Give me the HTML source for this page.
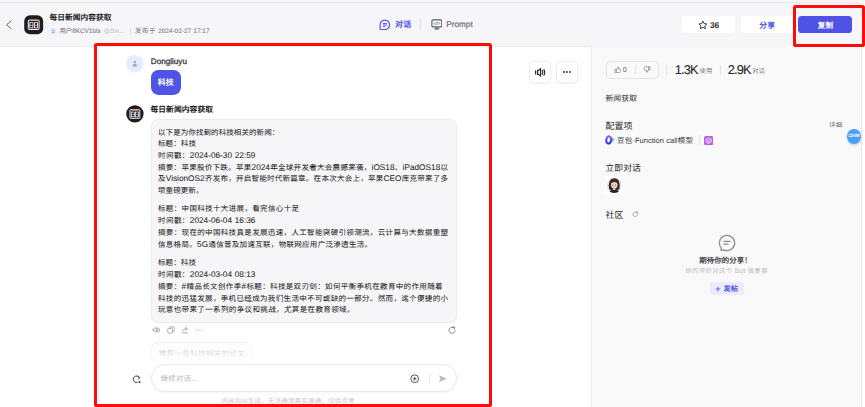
<!DOCTYPE html>
<html lang="zh-CN">
<head>
<meta charset="utf-8">
<title>每日新闻内容获取</title>
<style>
html,body{margin:0;padding:0;}
body{width:865px;height:407px;position:relative;overflow:hidden;background:#fff;font-family:"Liberation Sans",sans-serif;text-rendering:geometricPrecision;}
.b{position:absolute;display:block;}
.t{position:absolute;display:block;white-space:nowrap;line-height:12px;height:12px;}
.j{text-align:justify;text-align-last:justify;}
.l{font-size:1.1em;line-height:0;}
.m{-webkit-text-stroke:0.05px currentColor;}
</style>
</head>
<body>
<div class="b" style="left:0px;top:0px;width:865.00px;height:2.40px;background:#f7f7f7;"></div>
<div class="b" style="left:0px;top:2.2px;width:861.70px;height:44.40px;background:#f6f6f8;border-top:0.8px solid #e9e9eb;border-bottom:0.7px solid #e9e9ec;border-top-right-radius:4px;box-sizing:border-box;"></div>
<div class="b" style="left:591.3px;top:46.4px;width:270.30px;height:360.60px;background:#f9f9f9;border-left:0.7px solid #ebebee;border-right:0.7px solid #e6e6ea;box-sizing:border-box;"></div>
<svg class="b" style="left:5px;top:19px;" width="8.00" height="12.00" viewBox="0 0 8.00 12.00"><polyline points="6.3,1.8 1.6,5.75 6.3,9.7" fill="none" stroke="#6a6a72" stroke-width="1" stroke-linecap="round" stroke-linejoin="round"/></svg>
<svg class="b" style="left:23.2px;top:14.2px;" width="21.40" height="21.40" viewBox="0 0 21.40 21.40"><circle cx="10.7" cy="10.7" r="10.5" fill="#fff"/><rect x="1.2" y="1.2" width="19.0" height="19.0" rx="5.89" fill="#1c1c23"/><rect x="5.30" y="6.10" width="10.80" height="9.40" rx="0.80" fill="none" stroke="#fff" stroke-width="1.00"/><rect x="7.10" y="5.80" width="7.20" height="1.30" fill="#f0a060"/><rect x="6.80" y="8.70" width="3.20" height="5.20" fill="none" stroke="#fff" stroke-width="0.80"/><rect x="11.40" y="8.70" width="3.20" height="5.20" fill="none" stroke="#fff" stroke-width="0.80"/><line x1="6.80" y1="11.30" x2="10.00" y2="11.30" stroke="#fff" stroke-width="0.60"/><line x1="11.40" y1="11.30" x2="14.60" y2="11.30" stroke="#fff" stroke-width="0.60"/></svg>
<span class="t j" style="left:49.6px;top:11.80px;font-size:7.7px;color:#1b1b1f;width:61.9px;font-weight:bold;">每日新闻内容获取</span>
<svg class="b" style="left:49.6px;top:28.3px;" width="6.30" height="6.30" viewBox="0 0 6.30 6.30"><circle cx="3.15" cy="3.15" r="3.15" fill="#dde9fb"/><circle cx="3.15" cy="2.5" r="0.8" fill="#6f96e6"/><path d="M1.7 4.7 Q3.15 2.6 4.6 4.7 Z" fill="#6f96e6"/></svg>
<span class="t j" style="left:59.4px;top:25.50px;font-size:6.4px;color:#84848c;width:41px;-webkit-text-stroke:0.12px #84848c;">用户8KCV1bls</span>
<span class="t" style="left:103.4px;top:25.50px;font-size:6.4px;color:#bdbdc4;">@Sin...</span>
<div class="b" style="left:129.8px;top:28px;width:0.60px;height:7.00px;background:#dcdce1;"></div>
<span class="t j" style="left:135px;top:25.50px;font-size:6.45px;color:#84848c;width:74.5px;-webkit-text-stroke:0.12px #84848c;">发布于 2024-02-27 17:17</span>
<svg class="b" style="left:379.2px;top:18.5px;" width="11.40" height="11.70" viewBox="0 0 11.40 11.70"><path d="M1.1 5.85 A4.75 4.75 0 1 1 5.85 10.6 L2.3 10.6 Q1.1 10.6 1.1 9.4 Z" fill="none" stroke="#4d53e8" stroke-width="1.2"/><path d="M4 4.5 H7.9 M4 6 H7.9 M4 7.5 H6.2" stroke="#4d53e8" stroke-width="0.95" fill="none"/></svg>
<span class="t j" style="left:395px;top:18.70px;font-size:8.0px;color:#4d53e8;width:16.2px;font-weight:bold;">对话</span>
<div class="b" style="left:419.9px;top:18.3px;width:0.60px;height:12.50px;background:#e2e2e6;"></div>
<svg class="b" style="left:430.5px;top:19.2px;" width="11.70" height="10.70" viewBox="0 0 11.70 10.70"><rect x="0.9" y="0.9" width="9.9" height="7" rx="1" fill="none" stroke="#5a5a62" stroke-width="1.1"/><path d="M3.4 9.9 H8.3 M5.85 7.9 V9.9" stroke="#5a5a62" stroke-width="1.1" fill="none"/><path d="M4.3 3.2 L3.1 4.4 L4.3 5.6 M7.4 3.2 L8.6 4.4 L7.4 5.6 M6.4 3 L5.3 5.8" stroke="#5a5a62" stroke-width="0.75" fill="none"/></svg>
<span class="t" style="left:446.3px;top:18.80px;font-size:8.2px;color:#6e6e76;-webkit-text-stroke:0.2px #6e6e76;">Prompt</span>
<div class="b" style="left:682.2px;top:15.8px;width:52.50px;height:17.60px;background:#fff;border-radius:3.5px;"></div>
<svg class="b" style="left:698.2px;top:19.7px;" width="9.80" height="9.80" viewBox="0 0 9.80 9.80"><path d="M4.9 1 L6.1 3.6 L8.9 3.95 L6.85 5.9 L7.4 8.7 L4.9 7.3 L2.4 8.7 L2.95 5.9 L0.9 3.95 L3.7 3.6 Z" fill="none" stroke="#2c2c30" stroke-width="0.9" stroke-linejoin="round"/></svg>
<span class="t" style="left:710.0px;top:19.00px;font-size:8.3px;color:#2c2c30;font-weight:bold;">36</span>
<div class="b" style="left:740.9px;top:15.8px;width:52.70px;height:17.60px;background:#fff;border-radius:3.5px;"></div>
<span class="t j" style="left:759.3px;top:19.50px;font-size:7.75px;color:#4d53e8;width:15.6px;font-weight:bold;">分享</span>
<div class="b" style="left:798.2px;top:15.7px;width:53.90px;height:17.80px;background:#4e53e6;border-radius:3.6px;"></div>
<span class="t j" style="left:817.8px;top:19.50px;font-size:7.6px;color:#fff;width:15.3px;font-weight:bold;">复制</span>
<svg class="b" style="left:126.4px;top:55.2px;" width="17.50" height="17.50" viewBox="0 0 17.50 17.50"><circle cx="8.75" cy="8.75" r="8.75" fill="#e4edfb"/><circle cx="8.75" cy="7.1" r="1.25" fill="#8ea8da"/><path d="M6.5 11.6 Q6.5 8.7 8.75 8.7 Q11 8.7 11 11.6 Z" fill="#8ea8da"/></svg>
<span class="t" style="left:150.8px;top:55.70px;font-size:8.15px;color:#36363c;-webkit-text-stroke:0.3px #36363c;">Dongliuyu</span>
<div class="b" style="left:150.9px;top:70.3px;width:29.90px;height:24.50px;background:#4e54e6;border-radius:7.4px;"></div>
<span class="t j" style="left:157.8px;top:76.60px;font-size:7.95px;color:#fff;width:16px;font-weight:bold;">科技</span>
<svg class="b" style="left:125.25px;top:103.6px;" width="19.80" height="19.80" viewBox="0 0 19.80 19.80"><rect x="1.2" y="1.2" width="17.4" height="17.4" rx="8.7" fill="#1c1c23"/><rect x="4.95" y="5.69" width="9.89" height="8.61" rx="0.73" fill="none" stroke="#fff" stroke-width="0.92"/><rect x="6.60" y="5.41" width="6.59" height="1.19" fill="#f0a060"/><rect x="6.33" y="8.07" width="2.93" height="4.76" fill="none" stroke="#fff" stroke-width="0.73"/><rect x="10.54" y="8.07" width="2.93" height="4.76" fill="none" stroke="#fff" stroke-width="0.73"/><line x1="6.33" y1="10.45" x2="9.26" y2="10.45" stroke="#fff" stroke-width="0.55"/><line x1="10.54" y1="10.45" x2="13.47" y2="10.45" stroke="#fff" stroke-width="0.55"/></svg>
<span class="t j" style="left:150.4px;top:103.90px;font-size:7.78px;color:#1b1b1f;width:62.6px;font-weight:bold;">每日新闻内容获取</span>
<div class="b" style="left:150.7px;top:118.6px;width:306.10px;height:204.20px;background:#f6f6f8;border:0.7px solid #ebebef;border-radius:7px;box-sizing:border-box;"></div>
<span class="t j m" style="left:158px;top:126.60px;font-size:7.5px;color:#1e1e22;width:121.3px;">以下是为你找到的科技相关的新闻：</span>
<span class="t j m" style="left:158px;top:138.30px;font-size:7.5px;color:#1e1e22;width:38px;">标题：科技</span>
<span class="t j m" style="left:158px;top:150.00px;font-size:7.5px;color:#1e1e22;width:97.4px;">时间戳：<span class="l">2024-06-30 22:59</span></span>
<span class="t j m" style="left:158px;top:161.70px;font-size:7.5px;color:#1e1e22;width:290px;">摘要：苹果股价下跌。苹果<span class="l">2024</span>年全球开发者大会震撼来袭，<span class="l">iOS18</span>、<span class="l">iPadOS18</span>以</span>
<span class="t j m" style="left:158px;top:173.40px;font-size:7.5px;color:#1e1e22;width:290px;">及<span class="l">VisionOS2</span>齐发布，开启智能时代新篇章。在本次大会上，苹果<span class="l">CEO</span>库克带来了多</span>
<span class="t j m" style="left:158px;top:185.10px;font-size:7.5px;color:#1e1e22;width:45.4px;">项重磅更新。</span>
<span class="t j m" style="left:158px;top:203.40px;font-size:7.5px;color:#1e1e22;width:141px;">标题：中国科技十大进展，看完信心十足</span>
<span class="t j m" style="left:158px;top:215.20px;font-size:7.5px;color:#1e1e22;width:97.4px;">时间戳：<span class="l">2024-06-04 16:36</span></span>
<span class="t j m" style="left:158px;top:226.90px;font-size:7.5px;color:#1e1e22;width:290px;">摘要：现在的中国科技真是发展迅速，人工智能突破引领潮流，云计算与大数据重塑</span>
<span class="t j m" style="left:158px;top:238.70px;font-size:7.5px;color:#1e1e22;width:214px;">信息格局。<span class="l">5G</span>通信普及加速互联，物联网应用广泛渗透生活。</span>
<span class="t j m" style="left:158px;top:257.40px;font-size:7.5px;color:#1e1e22;width:38px;">标题：科技</span>
<span class="t j m" style="left:158px;top:269.10px;font-size:7.5px;color:#1e1e22;width:97.4px;">时间戳：<span class="l">2024-03-04 08:13</span></span>
<span class="t j m" style="left:158px;top:280.80px;font-size:7.5px;color:#1e1e22;width:284.5px;">摘要：<span class="l">#</span>精品长文创作季<span class="l">#</span>标题：科技是双刃剑：如何平衡手机在教育中的作用随着</span>
<span class="t j m" style="left:158px;top:292.50px;font-size:7.5px;color:#1e1e22;width:290px;">科技的迅猛发展，手机已经成为我们生活中不可或缺的一部分。然而，这个便捷的小</span>
<span class="t j m" style="left:158px;top:304.30px;font-size:7.5px;color:#1e1e22;width:196.5px;">玩意也带来了一系列的争议和挑战，尤其是在教育领域。</span>
<svg class="b" style="left:151.5px;top:326.3px;" width="8.60" height="7.90" viewBox="0 0 8.60 7.90"><path d="M1 3 H2.4 L4.4 1.3 V6.6 L2.4 4.9 H1 Z" fill="none" stroke="#8b8b93" stroke-width="0.7" stroke-linejoin="round"/><path d="M5.6 2.6 Q6.5 3.95 5.6 5.3 M6.8 1.7 Q8.2 3.95 6.8 6.2" fill="none" stroke="#8b8b93" stroke-width="0.7" stroke-linecap="round"/></svg>
<svg class="b" style="left:166.5px;top:326.3px;" width="8.00" height="7.90" viewBox="0 0 8.00 7.90"><rect x="0.8" y="2.4" width="4.6" height="4.7" rx="0.8" fill="none" stroke="#8b8b93" stroke-width="0.7"/><path d="M2.6 2.2 V1.5 Q2.6 0.8 3.3 0.8 H6.5 Q7.2 0.8 7.2 1.5 V4.8 Q7.2 5.5 6.5 5.5 H5.6" fill="none" stroke="#8b8b93" stroke-width="0.7"/></svg>
<svg class="b" style="left:180.9px;top:326.3px;" width="8.00" height="7.90" viewBox="0 0 8.00 7.90"><path d="M1 6.9 H7" stroke="#8b8b93" stroke-width="0.7" fill="none"/><path d="M1.4 5.2 Q2 2.6 5.2 2.6 M4.4 1 L6.6 2.7 L4.4 4.3" stroke="#8b8b93" stroke-width="0.7" fill="none" stroke-linecap="round" stroke-linejoin="round"/></svg>
<svg class="b" style="left:195.3px;top:326.3px;" width="8.20" height="7.90" viewBox="0 0 8.20 7.90"><circle cx="1.6" cy="4" r="0.55" fill="#8b8b93"/><circle cx="4.1" cy="4" r="0.55" fill="#8b8b93"/><circle cx="6.6" cy="4" r="0.55" fill="#8b8b93"/></svg>
<svg class="b" style="left:447.5px;top:326.3px;" width="8.50" height="7.90" viewBox="0 0 8.50 7.90"><path d="M7.2 4.6 A3.1 3.1 0 1 1 6.1 1.9" fill="none" stroke="#7c7c84" stroke-width="0.9" stroke-linecap="round"/><path d="M4.9 0.7 L6.9 1.3 L6.3 3.2" fill="none" stroke="#7c7c84" stroke-width="0.9" stroke-linecap="round" stroke-linejoin="round"/></svg>
<div class="b" style="left:151.2px;top:341.5px;width:100.80px;height:24.50px;background:#fdfdfe;border:0.7px solid #f0f0f3;border-radius:7px;box-sizing:border-box;"></div>
<span class="t j" style="left:158.7px;top:348.00px;font-size:7.5px;color:#bcbcc2;width:86.2px;">推荐一些科技相关的论文</span>
<div class="b" style="left:145px;top:343px;width:117.00px;height:25.00px;background:linear-gradient(to bottom, rgba(255,255,255,0) 0%, rgba(255,255,255,0.55) 45%, #fff 80%);"></div>
<div class="b" style="left:150.5px;top:364.3px;width:306.50px;height:28.00px;background:#fff;border:0.7px solid #e9e9ed;border-radius:14px;box-sizing:border-box;box-shadow:0 1px 3px rgba(0,0,0,0.04);"></div>
<span class="t j" style="left:160.5px;top:372.80px;font-size:7.5px;color:#b6b6bc;width:36.9px;">继续对话...</span>
<svg class="b" style="left:131.9px;top:374.7px;" width="9.80" height="8.80" viewBox="0 0 9.80 8.80"><path d="M7.4 2.6 A3.3 3.3 0 1 0 5.2 7.5" fill="none" stroke="#3e3e44" stroke-width="1" stroke-linecap="round"/><path d="M5.9 1.3 L7.7 2.4 L6.6 4.1" fill="none" stroke="#3e3e44" stroke-width="0.9" stroke-linecap="round" stroke-linejoin="round"/><path d="M7.5 5.3 L8 6.5 L9.2 7 L8 7.5 L7.5 8.7 L7 7.5 L5.8 7 L7 6.5 Z" fill="#3e3e44"/></svg>
<svg class="b" style="left:410.3px;top:373.7px;" width="9.40" height="9.50" viewBox="0 0 9.40 9.50"><circle cx="4.7" cy="4.75" r="3.9" fill="none" stroke="#2e2e33" stroke-width="0.8"/><path d="M4.7 2.9 V6.6 M2.85 4.75 H6.55" stroke="#2e2e33" stroke-width="0.8" fill="none"/></svg>
<div class="b" style="left:428.6px;top:374px;width:0.60px;height:9.00px;background:#e2e2e6;"></div>
<svg class="b" style="left:438.4px;top:373.7px;" width="9.70" height="9.50" viewBox="0 0 9.70 9.50"><path d="M1 1.2 L8.6 4.75 L1 8.3 L2.4 4.75 Z" fill="#b9b9bf"/></svg>
<span class="t j" style="left:221.4px;top:395.70px;font-size:6.5px;color:#cacace;width:133.2px;">内容由AI生成，无法确保真实准确，仅供参考</span>
<div class="b" style="left:528.7px;top:60.5px;width:22.20px;height:22.20px;background:#fff;border:0.6px solid #f0f0f3;border-radius:5px;box-sizing:border-box;box-shadow:0 0.5px 2.5px rgba(0,0,0,0.06);"></div>
<svg class="b" style="left:533.9px;top:66.5px;" width="12.10" height="10.80" viewBox="0 0 12.10 10.80"><path d="M3.6 3.4 H4.6 L6.6 1.6 V9.2 L4.6 7.4 H3.6 Z" fill="none" stroke="#222226" stroke-width="1.15" stroke-linejoin="round"/><path d="M1.6 3.9 V6.9" stroke="#222226" stroke-width="1.2" fill="none" stroke-linecap="round"/><path d="M8.3 3.6 Q9.3 5.4 8.3 7.2 M9.9 2.6 Q11.6 5.4 9.9 8.2" fill="none" stroke="#222226" stroke-width="1.1" stroke-linecap="round"/></svg>
<div class="b" style="left:555.5px;top:60.5px;width:22.40px;height:22.20px;background:#fff;border:0.6px solid #f0f0f3;border-radius:5px;box-sizing:border-box;box-shadow:0 0.5px 2.5px rgba(0,0,0,0.06);"></div>
<svg class="b" style="left:562px;top:69.6px;" width="10.00" height="4.00" viewBox="0 0 10.00 4.00"><circle cx="1.9" cy="2" r="0.95" fill="#2a2a2e"/><circle cx="4.95" cy="2" r="0.95" fill="#2a2a2e"/><circle cx="8" cy="2" r="0.95" fill="#2a2a2e"/></svg>
<div class="b" style="left:605.5px;top:60.5px;width:53.20px;height:18.20px;border:0.7px solid #e4e4e8;border-radius:4px;box-sizing:border-box;background:#fafafa;"></div>
<svg class="b" style="left:613.5px;top:65.8px;" width="7.80" height="7.30" viewBox="0 0 7.80 7.30"><path d="M1 3.5 H2.4 V6.6 H1 Z M2.4 3.6 L3.9 0.9 Q4.9 1.1 4.5 2.3 L4.3 3.1 H6.3 Q7 3.2 6.8 3.9 L6.1 6.2 Q5.9 6.6 5.5 6.6 H2.4" fill="none" stroke="#77777f" stroke-width="0.65" stroke-linejoin="round"/></svg>
<span class="t" style="left:622.8px;top:63.80px;font-size:7.3px;color:#66666e;">0</span>
<div class="b" style="left:635.3px;top:65.5px;width:0.60px;height:8.20px;background:#e3e3e7;"></div>
<svg class="b" style="left:643.1px;top:66.2px;" width="8.00" height="7.30" viewBox="0 0 8.00 7.30"><g transform="rotate(180 4 3.65)"><path d="M1 3.5 H2.4 V6.6 H1 Z M2.4 3.6 L3.9 0.9 Q4.9 1.1 4.5 2.3 L4.3 3.1 H6.3 Q7 3.2 6.8 3.9 L6.1 6.2 Q5.9 6.6 5.5 6.6 H2.4" fill="none" stroke="#77777f" stroke-width="0.65" stroke-linejoin="round"/></g></svg>
<div class="b" style="left:666.4px;top:65px;width:0.60px;height:9.50px;background:#e3e3e7;"></div>
<span class="t" style="left:674.8px;top:61.70px;font-size:12.8px;color:#26262a;line-height:16px;height:16px;letter-spacing:-0.9px;-webkit-text-stroke:0.1px #26262a;">1.3K</span>
<span class="t j" style="left:699.5px;top:65.60px;font-size:6.35px;color:#7d7d85;width:12.8px;">使用</span>
<div class="b" style="left:719.7px;top:65px;width:0.60px;height:9.50px;background:#e3e3e7;"></div>
<span class="t" style="left:727.8px;top:61.70px;font-size:12.8px;color:#26262a;line-height:16px;height:16px;letter-spacing:-0.9px;-webkit-text-stroke:0.1px #26262a;">2.9K</span>
<span class="t j" style="left:752.2px;top:65.60px;font-size:6.35px;color:#7d7d85;width:12.8px;">对话</span>
<span class="t j" style="left:605.4px;top:92.90px;font-size:7.85px;color:#2d2d31;width:31.6px;">新闻获取</span>
<span class="t j" style="left:605.4px;top:119.60px;font-size:8.95px;color:#1f1f23;width:27.1px;">配置项</span>
<span class="t j" style="left:829px;top:119.60px;font-size:6.5px;color:#6f6f77;width:13.2px;">详细</span>
<svg class="b" style="left:605.3px;top:135.2px;" width="9.40" height="9.80" viewBox="0 0 9.40 9.80"><defs><linearGradient id="dbg" x1="0.3" y1="0" x2="0.4" y2="1"><stop offset="0" stop-color="#a862f2"/><stop offset="0.55" stop-color="#5a3cf0"/><stop offset="1" stop-color="#1f36f2"/></linearGradient></defs><path d="M4.6 2.1 Q9.9 4.2 8.7 5.1 Q7 6.8 4.2 8.1 Z" fill="#2dd6a6" stroke="#2dd6a6" stroke-width="1" stroke-linejoin="round"/><ellipse cx="3.7" cy="4.95" rx="2.35" ry="3.6" transform="rotate(12 3.7 4.95)" fill="#fdfdff" stroke="url(#dbg)" stroke-width="2"/></svg>
<span class="t j" style="left:617px;top:134.50px;font-size:7.55px;color:#38383c;width:76px;">豆包·Function call模型</span>
<div class="b" style="left:698.7px;top:135px;width:0.60px;height:10.30px;background:#e1e1e5;"></div>
<svg class="b" style="left:704.1px;top:135.7px;" width="9.30" height="9.20" viewBox="0 0 9.30 9.20"><rect x="0" y="0" width="9.3" height="9.2" rx="2" fill="#b95de9"/><path d="M4.65 1.9 L7.2 3.3 V6 L4.65 7.4 L2.1 6 V3.3 Z M2.1 3.3 L4.65 4.7 L7.2 3.3 M4.65 4.7 V7.4" fill="none" stroke="#fff" stroke-width="0.7" stroke-linejoin="round"/></svg>
<div class="b" style="left:846.8px;top:129px;width:14.20px;height:14.50px;background:#4aa0f6;border-radius:50%;box-shadow:0 1px 2.5px rgba(60,120,220,0.35);"></div>
<span class="t" style="left:846.8px;top:130.30px;font-size:4.6px;color:#fff;font-weight:bold;width:14.2px;text-align:center;letter-spacing:-0.1px;">124M</span>
<span class="t j" style="left:605.4px;top:161.90px;font-size:8.8px;color:#1f1f23;width:35.5px;">立即对话</span>
<svg class="b" style="left:605.2px;top:175.7px;" width="18.40" height="18.40" viewBox="0 0 18.40 18.40"><rect x="0" y="0" width="18.4" height="18.4" rx="3.5" fill="#fff"/><clipPath id="avc"><circle cx="9.2" cy="9.4" r="7.6"/></clipPath><circle cx="9.2" cy="9.4" r="7.6" fill="#d9e9fb"/><g clip-path="url(#avc)"><path d="M3.6 17.5 Q4.2 13.4 9.2 13.4 Q14.2 13.4 14.8 17.5 Z" fill="#23232b"/><path d="M4.1 13.2 Q3.2 8 4.6 5.2 Q6.2 2.2 9.3 2.2 Q12.6 2.2 14 5.2 Q15.2 8 14.4 13.2 Q11 14.6 9.2 14.4 Q7 14.6 4.1 13.2 Z" fill="#3b2a28"/><rect x="8.1" y="11.4" width="2.2" height="2.6" fill="#eec4ad"/><ellipse cx="9.3" cy="8.6" rx="3.3" ry="3.9" fill="#f3d2bf"/><path d="M5.6 7.6 Q6.6 4 10.2 4.4 Q13 4.8 12.9 8 Q11.4 6.2 9.4 6 Q7.2 6.2 5.6 7.6 Z" fill="#3b2a28"/><circle cx="7.9" cy="9" r="0.5" fill="#3a2a2a"/><circle cx="10.7" cy="9" r="0.5" fill="#3a2a2a"/><path d="M8.5 11 Q9.3 11.5 10.1 11" stroke="#c9766e" stroke-width="0.5" fill="none"/></g></svg>
<span class="t j" style="left:605.4px;top:208.60px;font-size:8.8px;color:#1f1f23;width:17.8px;">社区</span>
<svg class="b" style="left:631.5px;top:210.8px;" width="7.00" height="6.70" viewBox="0 0 7.00 6.70"><path d="M5.7 3.4 A2.3 2.3 0 1 1 4.9 1.6" fill="none" stroke="#8b8b93" stroke-width="0.7" stroke-linecap="round"/><path d="M4.3 0.7 L5.7 1.2 L5.2 2.6" fill="none" stroke="#8b8b93" stroke-width="0.7" stroke-linecap="round" stroke-linejoin="round"/></svg>
<svg class="b" style="left:717.7px;top:234.3px;" width="18.00" height="18.00" viewBox="0 0 18.00 18.00"><path d="M9 16.6 A7.6 7.6 0 1 0 3.4 14.1 Q3.4 15.3 2.9 16 Q4.6 16.3 5.6 15.8 Q7.2 16.6 9 16.6 Z" fill="none" stroke="#8a8a90" stroke-width="1.3" stroke-linejoin="round"/><path d="M5.9 7.3 H12.1 M5.9 10.2 H10" stroke="#8a8a90" stroke-width="1.3" stroke-linecap="round" fill="none"/></svg>
<span class="t j" style="left:699.2px;top:255.10px;font-size:7.45px;color:#4a4a50;width:52.5px;font-weight:bold;">期待你的分享！</span>
<span class="t j" style="left:685.2px;top:265.50px;font-size:6.45px;color:#bcbcc2;width:82.4px;">你的评价对这个 <span class="l">Bot</span> 很重要</span>
<div class="b" style="left:709.6px;top:281.7px;width:34.00px;height:13.30px;background:#ebebfd;border-radius:3px;"></div>
<svg class="b" style="left:715.0px;top:285.8px;" width="6.00" height="6.00" viewBox="0 0 6.00 6.00"><path d="M3 0.6 V5.4 M0.6 3 H5.4" stroke="#4d53e8" stroke-width="0.8" fill="none"/></svg>
<span class="t j" style="left:723.6px;top:282.80px;font-size:7.2px;color:#4d53e8;width:14.4px;font-weight:bold;">发帖</span>
<div class="b" style="left:94.0px;top:42.9px;width:398.20px;height:363.90px;border:3.5px solid #fc0d0a;border-radius:2.6px;box-sizing:border-box;"></div>
<div class="b" style="left:793.3px;top:5.1px;width:71.90px;height:41.50px;border:3.6px solid #fc0d0a;border-radius:2.6px;box-sizing:border-box;"></div>
</body>
</html>
